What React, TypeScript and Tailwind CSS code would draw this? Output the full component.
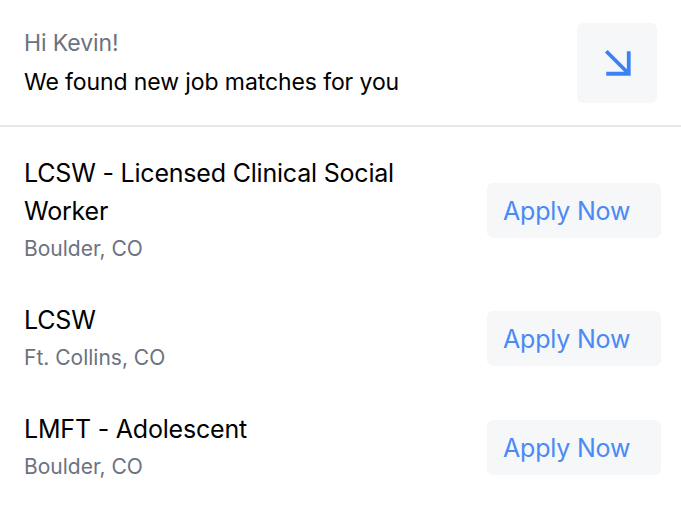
import React from 'react';

const jobs = [
  { title: 'LCSW - Licensed Clinical Social Worker', location: 'Boulder, CO' },
  { title: 'LCSW', location: 'Ft. Collins, CO' },
  { title: 'LMFT - Adolescent', location: 'Boulder, CO' },
];

function ArrowDownRight() {
  return (
    <svg width="27" height="27" viewBox="6 6 12 12" fill="none" stroke="#3b82f6" strokeWidth="1.7" strokeLinecap="butt" strokeLinejoin="miter">
      <path d="M7 7l10 10" />
      <path d="M17 7v10H7" />
    </svg>
  );
}

export default function App() {
  return (
    <div className="w-[681px] h-[509px] bg-white font-['Inter',sans-serif] overflow-hidden">
      <div className="flex items-center justify-between h-[127px] pl-6 pr-6 border-b-2 border-[#e5e7eb]">
        <div className="flex flex-col">
          <span className="text-[23px] leading-[39px] text-[#6b7280] tracking-[-0.1px]">Hi Kevin!</span>
          <span className="text-[23px] leading-[39px] text-black tracking-[-0.1px]">We found new job matches for you</span>
        </div>
        <button className="w-20 h-20 rounded-md bg-[#f6f7f9] flex items-center justify-center">
          <ArrowDownRight />
        </button>
      </div>

      <div className="flex flex-col pt-[27px] gap-[35px]">
        {jobs.map((job, i) => (
          <div key={i} className="flex items-center justify-between pl-6 pr-5">
            <div className="flex flex-col w-[410px]">
              <span className="text-[25px] leading-[38px] text-black tracking-[-0.2px]">{job.title}</span>
              <span className="text-[21px] leading-[34px] pt-[2px] text-[#6b7280]">{job.location}</span>
            </div>
            <button className="w-[174px] h-[55px] rounded-md bg-[#f6f7f9] text-[25px] text-[#4a8af4] text-left pl-4 pt-[3px] tracking-[-0.2px]">
              Apply Now
            </button>
          </div>
        ))}
      </div>
    </div>
  );
}
